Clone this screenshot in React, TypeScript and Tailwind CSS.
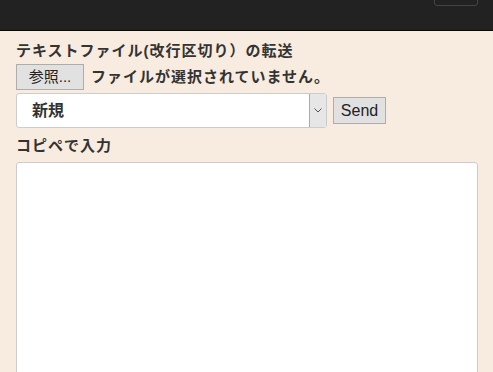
import React from "react";

export default function App() {
  return (
    <div
      className="h-[372px] bg-[#f8ebe0] text-[#333] overflow-hidden"
      style={{ fontFamily: '"Liberation Sans", "Noto Sans CJK JP", sans-serif' }}
    >
      {/* Navbar */}
      <div className="h-[31px] bg-[#222] border-b border-[#080808] flex justify-end pr-[15px]">
        <div className="w-[44px] h-[7px] -mt-px border border-[#444] rounded-b-[3px]" />
      </div>

      <div className="px-[16px] pt-[10px]">
        <div className="text-[15px] font-bold leading-[20px] tracking-[1px]">
          テキストファイル(改行区切り）の転送
        </div>

        <div className="flex items-center gap-[7px] mt-[3px]">
          <button className="h-[26px] w-[68px] bg-[#e1e1e1] border border-[#adadad] text-[15px] text-[#222]">
            参照...
          </button>
          <span className="text-[15px] font-bold tracking-[1px]">ファイルが選択されていません。</span>
        </div>

        <div className="flex items-center gap-[6px] mt-[3px]">
          <div className="w-[311px] h-[35px] bg-white border border-[#ccc] rounded-[3px] flex">
            <div className="flex-1 flex items-center pl-[15px] text-[16px] font-bold">新規</div>
            <div className="w-[17px] bg-[#e6e6e6] border-l border-[#aaa] flex items-center justify-center">
              <svg width="8" height="5" viewBox="0 0 8 5" fill="none">
                <path d="M0.5 0.5 L4 4 L7.5 0.5" stroke="#555" strokeWidth="1" />
              </svg>
            </div>
          </div>
          <button className="h-[27px] w-[53px] bg-[#e1e1e1] border border-[#adadad] text-[16px] text-[#222]">
            Send
          </button>
        </div>

        <div className="text-[15px] font-bold leading-[20px] mt-[8px] tracking-[1px]">コピペで入力</div>

        <textarea className="mt-[6px] block w-[462px] h-[240px] bg-white border border-[#ccc] rounded-[3px] resize-none" />
      </div>
    </div>
  );
}
